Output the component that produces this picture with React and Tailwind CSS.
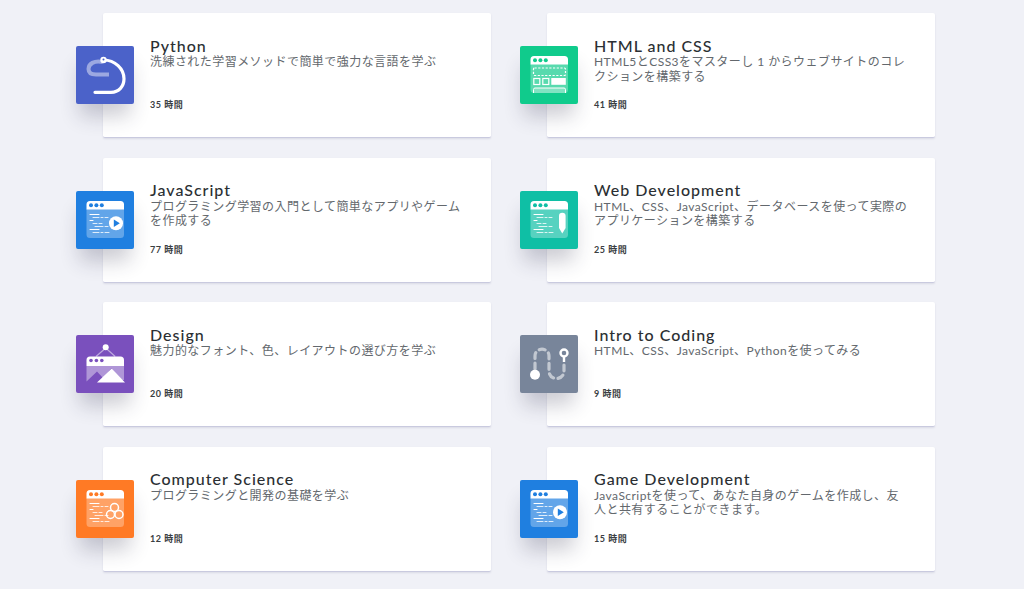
import React from 'react';

const WindowBase = ({ color, children }) => (
  <>
    <path d="M10.500 18h37.500v25.500a3.500 3.500 0 0 1-3.500 3.500h-30.500a3.500 3.500 0 0 1-3.500-3.500z" fill="#fff" fillOpacity=".3" />
    <path d="M14 10h30.500a3.500 3.500 0 0 1 3.500 3.500v5h-37.500v-5a3.500 3.500 0 0 1 3.500-3.500z" fill="#fff" />
    <circle cx="15" cy="14.200" r="2" fill={color} />
    <circle cx="20.400" cy="14.200" r="2" fill={color} />
    <circle cx="25.800" cy="14.200" r="2" fill={color} />
    {children}
  </>
);

const CodeLines = () => (
  <g stroke="#fff" strokeWidth="1.100" strokeLinecap="round">
    <path d="M14 23.500h9" />
    <path d="M17 26.500h6M25 26.500h2M29 26.500h3" strokeOpacity=".8" />
    <path d="M14 29.500h3" />
    <path d="M17 32.500h4M23 32.500h3" strokeOpacity=".8" />
    <path d="M19 35.500h8M29 35.500h3" strokeOpacity=".8" />
    <path d="M14 38.500h9" />
    <path d="M17 41.500h6M25 41.500h2M29 41.500h4" strokeOpacity=".8" />
  </g>
);

const PythonIcon = () => (
  <>
    <path d="M27 16C18 14 12.500 18 12.500 23c0 4 3.500 5.500 7.500 5.500h13" fill="none" stroke="#fff" strokeOpacity=".45" strokeWidth="4" />
    <path d="M19 46.300h16c8 0 13-6 13-13.500 0-10-9-18.800-20.500-18.800" fill="none" stroke="#fff" strokeWidth="3.200" strokeLinecap="round" />
    <circle cx="27.500" cy="14" r="3.200" fill="#fff" />
    <circle cx="27.500" cy="13.500" r="1" fill="#4b62c9" />
  </>
);

const HtmlIcon = ({ color }) => (
  <WindowBase color={color}>
    <rect x="13.500" y="22" width="32" height="7.500" rx="1" fill="none" stroke="#fff" strokeWidth="1.200" strokeDasharray="2.200 1.500" />
    <rect x="13.800" y="32.500" width="6" height="6" fill="none" stroke="#fff" strokeWidth="1.200" />
    <rect x="22.800" y="32.500" width="6" height="6" fill="none" stroke="#fff" strokeWidth="1.200" />
    <rect x="31.300" y="32" width="14.500" height="6.800" fill="#fff" />
    <path d="M13.500 47v-3.500a1.500 1.500 0 0 1 1.500-1.500h29a1.500 1.500 0 0 1 1.500 1.500v3.500" fill="#fff" fillOpacity=".25" stroke="#fff" strokeWidth="1" />
  </WindowBase>
);

const PlayIcon = ({ color }) => (
  <WindowBase color={color}>
    <CodeLines />
    <circle cx="40" cy="32.300" r="7" fill="#fff" />
    <path d="M37.800 28.500l6 3.800-6 3.800z" fill={color} />
  </WindowBase>
);

const PencilIcon = ({ color }) => (
  <WindowBase color={color}>
    <CodeLines />
    <path d="M39 25a3.300 3.300 0 0 1 6.600 0v12l-3.300 5.500-3.300-5.500z" fill="#fff" />
  </WindowBase>
);

const HexIcon = ({ color }) => (
  <WindowBase color={color}>
    <CodeLines />
    <g fill="none" stroke="#fff" strokeWidth="1.500">
      <circle cx="38.500" cy="27.500" r="4" />
      <circle cx="34.500" cy="34.500" r="4" />
      <circle cx="43" cy="34.500" r="4" />
    </g>
  </WindowBase>
);

const DesignIcon = ({ color }) => (
  <>
    <path d="M29.700 13L20 21.500M29.700 13l9.500 8.500" stroke="#fff" strokeOpacity=".5" strokeWidth="1.200" fill="none" />
    <circle cx="29.700" cy="12.300" r="3" fill="#fff" />
    <path d="M14 21.500h30.500a3.500 3.500 0 0 1 3.500 3.500v6h-37.500v-6a3.500 3.500 0 0 1 3.500-3.500z" fill="#fff" />
    <circle cx="15" cy="25.500" r="1.800" fill={color} />
    <circle cx="20.400" cy="25.500" r="1.800" fill={color} />
    <circle cx="25.800" cy="25.500" r="1.800" fill={color} />
    <path d="M10.500 31h37.500v14h-4.500l-8-12-8.500 10-6-6.500-10.500 10z" fill="#fff" fillOpacity=".4" />
    <path d="M35.700 33.500l13.300 14h-28z" fill="#fff" />
  </>
);

const PathIcon = () => (
  <>
    <path d="M15 34V21c0-9 14-9 14 0v15c0 10 15 10 15 0v-6" fill="none" stroke="#fff" strokeOpacity=".55" strokeWidth="3.200" strokeLinecap="round" strokeDasharray="6 4.500" />
    <circle cx="15" cy="39.700" r="5" fill="#fff" />
    <circle cx="44" cy="18" r="3.500" fill="none" stroke="#fff" strokeWidth="2.400" />
    <path d="M44 22v5" stroke="#fff" strokeWidth="2.400" />
  </>
);

const courses = [
  { title: 'Python', desc: '洗練された学習メソッドで簡単で強力な言語を学ぶ', hours: 35, color: '#4b62c9', icon: PythonIcon },
  { title: 'HTML and CSS', desc: 'HTML5とCSS3をマスターし 1 からウェブサイトのコレ\nクションを構築する', hours: 41, color: '#10cb8c', icon: HtmlIcon },
  { title: 'JavaScript', desc: 'プログラミング学習の入門として簡単なアプリやゲームを作成する', hours: 77, color: '#1f7fe0', icon: PlayIcon },
  { title: 'Web Development', desc: 'HTML、CSS、JavaScript、データベースを使って実際のアプリケーションを構築する', hours: 25, color: '#0fbfa5', icon: PencilIcon },
  { title: 'Design', desc: '魅力的なフォント、色、レイアウトの選び方を学ぶ', hours: 20, color: '#7a50bd', icon: DesignIcon },
  { title: 'Intro to Coding', desc: 'HTML、CSS、JavaScript、Pythonを使ってみる', hours: 9, color: '#78859a', icon: PathIcon },
  { title: 'Computer Science', desc: 'プログラミングと開発の基礎を学ぶ', hours: 12, color: '#ff7a25', icon: HexIcon },
  { title: 'Game Development', desc: 'JavaScriptを使って、あなた自身のゲームを作成し、友人と共有することができます。', hours: 15, color: '#1f7fe0', icon: PlayIcon },
];

const CourseCard = ({ course }) => {
  const Icon = course.icon;
  return (
    <div className="flex items-start h-[125px] bg-white rounded-[2px] border-b border-[#c9cadf] shadow-[0_1px_2px_rgba(60,60,110,0.12)]">
      <div
        className="shrink-0 w-[58px] h-[58px] mt-[33px] -ml-[27px] rounded-[2px] shadow-[0_16px_20px_-4px_rgba(40,40,70,0.24)]"
        style={{ backgroundColor: course.color }}
      >
        <svg viewBox="0 0 58 58" className="w-full h-full">
          <Icon color={course.color} />
        </svg>
      </div>
      <div className="ml-4 mt-[22.5px] w-[316px]">
        <h3 className="text-[16px] leading-[19px] font-medium tracking-[1px] text-[#2b2f33]">{course.title}</h3>
        <p className="mt-[0.5px] text-[12px] leading-[14.5px] tracking-[0.45px] text-[#63686d] h-[43px] whitespace-pre-line">{course.desc}</p>
        <div className="mt-[1px] text-[9px] leading-[12px] font-bold tracking-[0.5px] text-[#3a3e42]">{course.hours} 時間</div>
      </div>
    </div>
  );
};

export default function App() {
  return (
    <div className="h-[589px] overflow-hidden bg-[#f0f1f7] pt-[13px] pl-[103px] font-['Lato','Noto_Sans_CJK_JP',sans-serif]">
      <div className="grid grid-cols-[388px_388px] gap-x-[56px] gap-y-[19.67px]">
        {courses.map((c) => (
          <CourseCard key={c.title} course={c} />
        ))}
      </div>
    </div>
  );
}
